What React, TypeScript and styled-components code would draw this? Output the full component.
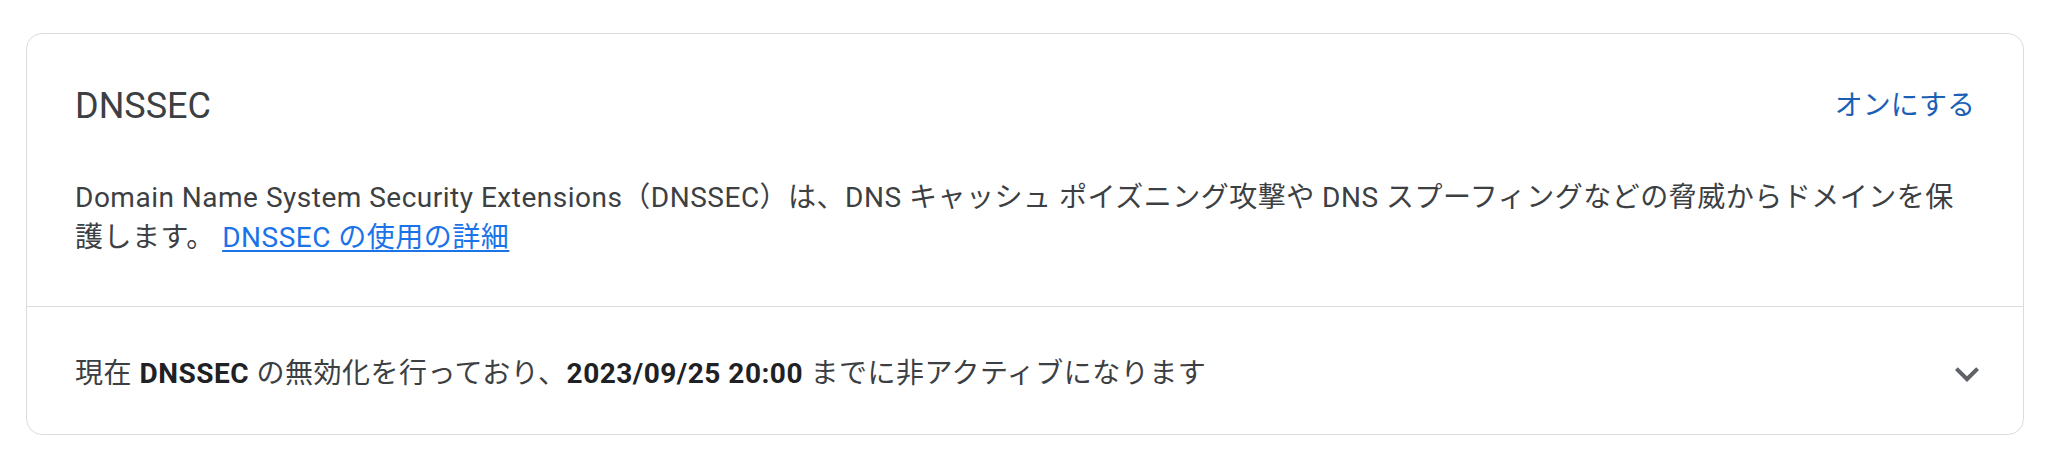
import React from "react";
import styled, { createGlobalStyle } from "styled-components";

const GlobalStyle = createGlobalStyle`
  html, body {
    margin: 0;
    padding: 0;
    background: #ffffff;
  }
  body {
    font-family: Roboto, "Noto Sans CJK JP", "Noto Sans", sans-serif;
    -webkit-font-smoothing: antialiased;
  }
  * { box-sizing: border-box; }
`;

const Page = styled.div`
  padding: 33px 34px 24px 26px;
`;

const Card = styled.section`
  border: 1px solid #dadce0;
  border-radius: 16px;
  background: #ffffff;
  overflow: hidden;
`;

const Header = styled.div`
  display: flex;
  align-items: center;
  justify-content: space-between;
  padding: 48px 48px 0 48px;
`;

const Title = styled.h2`
  margin: 0;
  font-family: Roboto, "Noto Sans CJK JP", sans-serif;
  font-size: 36px;
  line-height: 48px;
  font-weight: 400;
  color: #3c4043;
`;

const TextButton = styled.button`
  background: none;
  border: none;
  padding: 0;
  margin: 0;
  cursor: pointer;
  font-family: Roboto, "Noto Sans CJK JP", sans-serif;
  font-size: 28px;
  line-height: 40px;
  color: #1b5fb6;
`;

const Description = styled.p`
  margin: 0;
  padding: 48px;
  font-size: 28px;
  line-height: 40px;
  letter-spacing: 0.5px;
  color: #3c4043;
`;

const Link = styled.a`
  color: #1a73e8;
  text-decoration: underline;
  text-underline-offset: 3px;
  text-decoration-thickness: 2px;
`;

const StatusRow = styled.div`
  display: flex;
  align-items: center;
  justify-content: space-between;
  border-top: 1px solid #dadce0;
  padding: 43px 32px 36px 48px;
`;

const StatusText = styled.span`
  font-size: 28px;
  line-height: 40px;
  letter-spacing: 0.5px;
  color: #3c4043;
`;

const Strong = styled.b`
  font-weight: 700;
  color: #202124;
`;

const ExpandButton = styled.button`
  display: flex;
  align-items: center;
  justify-content: center;
  width: 48px;
  height: 48px;
  padding: 0;
  border: none;
  background: none;
  color: #5f6368;
  cursor: pointer;
`;

const ExpandIcon = () => (
  <svg width="48" height="48" viewBox="0 0 24 24" fill="currentColor" aria-hidden="true">
    <path d="M16.59 8.59L12 13.17 7.41 8.59 6 10l6 6 6-6z" />
  </svg>
);

export default function App() {
  return (
    <>
      <GlobalStyle />
      <Page>
        <Card>
          <Header>
            <Title>DNSSEC</Title>
            <TextButton>オンにする</TextButton>
          </Header>
          <Description>
            Domain Name System Security Extensions（DNSSEC）は、DNS キャッシュ ポイズニング攻撃や DNS スプーフィングなどの脅威からドメインを保護します。{" "}
            <Link href="#">DNSSEC の使用の詳細</Link>
          </Description>
          <StatusRow>
            <StatusText>
              現在 <Strong>DNSSEC</Strong> の無効化を行っており、<Strong>2023/09/25 20:00</Strong> までに非アクティブになります
            </StatusText>
            <ExpandButton aria-label="展開">
              <ExpandIcon />
            </ExpandButton>
          </StatusRow>
        </Card>
      </Page>
    </>
  );
}
